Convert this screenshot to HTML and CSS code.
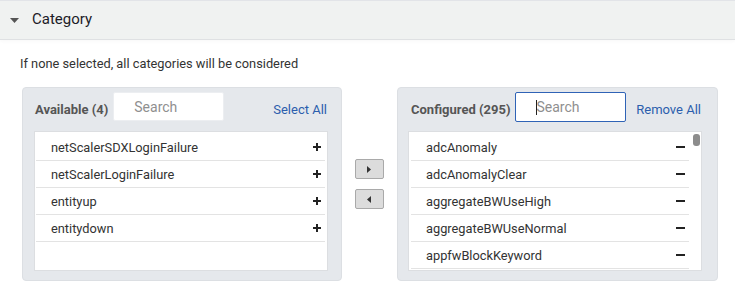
FILE: index.html
```html
<!DOCTYPE html>
<html>
<head>
<meta charset="utf-8">
<link rel="stylesheet" href="styles.css">
</head>
<body>
<div class="section-head">
  <svg class="caret" width="9" height="5" viewBox="0 0 9 5"><path d="M0 0H9L4.5 5Z" fill="#555"/></svg>
  <span class="section-title">Category</span>
</div>
<p class="hint">If none selected, all categories will be considered</p>
<div class="picker">
  <div class="panel left">
    <div class="panel-head">
      <span class="panel-title">Available (4)</span>
      <div class="search">Search</div>
      <a class="link">Select All</a>
    </div>
    <div class="list">
      <div class="row"><span>netScalerSDXLoginFailure</span><span class="plus"></span></div>
      <div class="row"><span>netScalerLoginFailure</span><span class="plus"></span></div>
      <div class="row"><span>entityup</span><span class="plus"></span></div>
      <div class="row"><span>entitydown</span><span class="plus"></span></div>
    </div>
  </div>
  <div class="moves">
    <button class="move"><svg width="4" height="7" viewBox="0 0 4 7"><path d="M0 0L4 3.5L0 7Z" fill="#333"/></svg></button>
    <button class="move"><svg width="4" height="7" viewBox="0 0 4 7"><path d="M4 0L0 3.5L4 7Z" fill="#333"/></svg></button>
  </div>
  <div class="panel right">
    <div class="panel-head">
      <span class="panel-title">Configured (295)</span>
      <div class="search focus"><span class="cursor"></span>Search</div>
      <a class="link">Remove All</a>
    </div>
    <div class="list scroll">
      <div class="row"><span>adcAnomaly</span><span class="minus"></span></div>
      <div class="row"><span>adcAnomalyClear</span><span class="minus"></span></div>
      <div class="row"><span>aggregateBWUseHigh</span><span class="minus"></span></div>
      <div class="row"><span>aggregateBWUseNormal</span><span class="minus"></span></div>
      <div class="row"><span>appfwBlockKeyword</span><span class="minus"></span></div>
      <div class="thumb"></div>
    </div>
  </div>
</div>
</body>
</html>
```
FILE: styles.css
```css
* { box-sizing: border-box; }
body {
  margin: 0;
  font-family: Roboto, "Liberation Sans", sans-serif;
  color: #333;
  background: #fff;
  width: 735px;
  height: 297px;
  overflow: hidden;
}
.section-head {
  height: 40px;
  background: #f0f2f1;
  border-top: 1px solid #e2e4e8;
  border-bottom: 1px solid #dfe1e3;
  box-shadow: 0 2px 3px rgba(0, 0, 0, 0.025);
  display: flex;
  align-items: center;
  padding-left: 10px;
}
.caret { margin-right: 13px; margin-top: 1px; flex: none; }
.section-title {
  font-size: 15px;
  color: #1c1c28;
  margin-top: -2px;
}
.hint {
  margin: 16px 0 0 20px;
  font-size: 12.8px;
  line-height: 15px;
  color: #333;
}
.picker {
  display: flex;
  align-items: flex-start;
  margin: 16px 0 0 22px;
}
.panel {
  height: 194px;
  background: #e5e8ec;
  border: 1px solid #dcdfe3;
  border-radius: 4px;
  flex: none;
}
.panel.left { width: 320px; padding: 0 13px 0 11px; }
.panel.right { width: 321px; padding: 0 15px 0 10px; }
.moves {
  width: 55px;
  flex: none;
  display: flex;
  flex-direction: column;
  align-items: center;
  gap: 10px;
  padding-top: 72px;
  padding-right: 1px;
}
.move {
  width: 29px;
  height: 20px;
  background: #dcdcdc;
  border: 1px solid #a9a9a9;
  border-radius: 2px;
  padding: 0;
  display: flex;
  align-items: center;
  justify-content: center;
}
.panel-head {
  height: 43px;
  display: flex;
  align-items: center;
}
.panel-title {
  flex: none;
  font-size: 13px;
  font-weight: 700;
  color: #555;
  margin-left: 1px;
  margin-right: 5px;
  white-space: nowrap;
}
.right .panel-title { margin-left: 3px; }
.search {
  flex: none;
  align-self: flex-start;
  margin-top: 4px;
  width: 111px;
  height: 29px;
  background: #fff;
  border: 1px solid #eceef1;
  border-radius: 2px;
  font-size: 14px;
  color: #8f8f8f;
  padding-left: 20px;
  display: flex;
  align-items: center;
}
.search.focus {
  border: 1px solid #2f63b6;
  position: relative;
  margin-top: 4px;
  height: 30px;
}
.cursor {
  position: absolute;
  left: 20px;
  top: 7px;
  width: 1px;
  height: 15px;
  background: #222;
}
.link {
  flex: none;
  margin-left: auto;
  font-size: 13px;
  color: #2c5ead;
  margin-right: 1px;
  white-space: nowrap;
}
.list {
  height: 140px;
  background: #fff;
  border: 1px solid #dcdee1;
  padding: 2px 2px 0 1px;
  position: relative;
  overflow: hidden;
}
.list.scroll { padding: 2px 12px 0 2px; }
.row {
  height: 27px;
  border-bottom: 1px solid #e3e3e3;
  display: flex;
  align-items: center;
  justify-content: space-between;
  padding: 0 4px 0 15px;
  font-size: 12.8px;
  color: #333;
}
.plus, .minus {
  flex: none;
  position: relative;
  width: 8px;
  height: 8px;
}
.plus::before, .minus::before {
  content: "";
  position: absolute;
  left: 0; top: 3px;
  width: 8px; height: 2px;
  background: #222;
}
.plus::after {
  content: "";
  position: absolute;
  left: 3px; top: 0;
  width: 2px; height: 8px;
  background: #222;
}
.minus { width: 9px; }
.minus::before { width: 9px; }
.thumb {
  position: absolute;
  right: 1px;
  top: 2px;
  width: 7px;
  height: 12px;
  border-radius: 3px;
  background: #8c8c8c;
}
```
